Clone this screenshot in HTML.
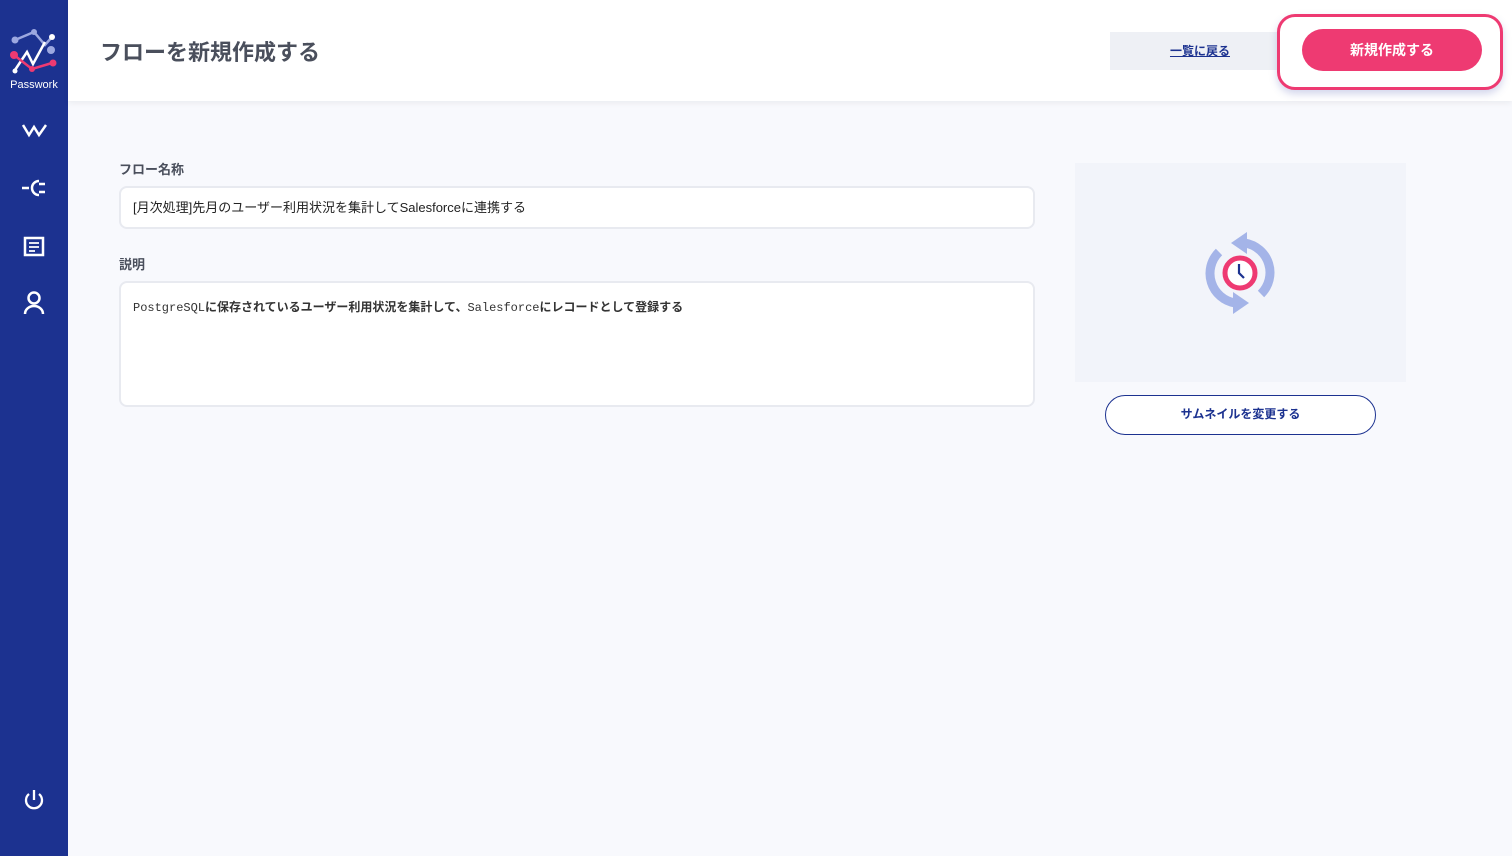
<!DOCTYPE html>
<html><head><meta charset="utf-8"><style>
*{box-sizing:border-box;margin:0;padding:0}
body{width:1512px;height:856px;background:#f8f9fd;font-family:"Liberation Sans","Noto Sans CJK JP",sans-serif;position:relative;overflow:hidden;color:#222}
.side{position:absolute;left:0;top:0;width:68px;height:856px;background:#1c3290}
.hdr{position:absolute;left:68px;top:0;right:0;height:101px;background:#fff;box-shadow:0 2px 6px rgba(0,0,0,.06)}
.title{position:absolute;left:100px;top:35px;font-size:22px;font-weight:bold;color:#4a4f5c}
.back{position:absolute;left:1110px;top:32px;width:180px;height:38px;background:#eef0f5;font-size:12px;font-weight:bold;color:#1c3290;text-decoration:underline;text-align:center;line-height:38px}
.outer{position:absolute;left:1277px;top:14px;width:226px;height:76px;border:3px solid #ee3a72;border-radius:18px;background:#fff;box-shadow:0 4px 8px rgba(80,90,180,.25)}
.new{position:absolute;left:1302px;top:29px;width:180px;height:42px;border-radius:21px;background:#ee3a72;color:#fff;font-size:14px;font-weight:bold;text-align:center;line-height:42px}
.lbl{position:absolute;left:119px;font-size:13px;font-weight:bold;color:#4a4f5c}
.in{position:absolute;left:119px;width:916px;background:#fff;border:2px solid #e8eaf0;border-radius:8px;font-size:13px;color:#222;padding-left:12px}
.thumb{position:absolute;left:1075px;top:163px;width:331px;height:219px;background:#f2f4fa}
.chg{position:absolute;left:1105px;top:395px;width:271px;height:40px;border:1.5px solid #1c3290;border-radius:20px;background:#fff;color:#1c3290;font-size:12px;font-weight:bold;text-align:center;line-height:37px}
</style></head><body>
<div class="side">
<svg width="68" height="80" style="position:absolute;left:0;top:22px">
<polyline points="15,18 34,10 45,23 52,15" stroke="#9ca8e0" stroke-width="2.5" fill="none"/>
<circle cx="15" cy="18" r="3.5" fill="#9ca8e0"/><circle cx="34" cy="10" r="3" fill="#9ca8e0"/><circle cx="52" cy="15" r="3" fill="#fff"/><circle cx="51" cy="28" r="4" fill="#9ca8e0"/>
<polyline points="15,48 27,30 33,42 45,20" stroke="#fff" stroke-width="2.5" fill="none"/>
<polyline points="14,33 32,47 52,41" stroke="#ee3a72" stroke-width="2.5" fill="none"/>
<circle cx="14" cy="33" r="4" fill="#ee3a72"/><circle cx="32" cy="47" r="3" fill="#ee3a72"/><circle cx="53" cy="41" r="3.5" fill="#ee3a72"/><circle cx="15" cy="49" r="2.5" fill="#fff"/>
</svg>
<div style="position:absolute;left:0;width:68px;top:79px;text-align:center;color:#fff;font-size:11px">Passwork</div>
<svg width="68" height="340" style="position:absolute;left:0;top:110px" stroke="#fff" fill="none" stroke-width="2.5">
<polyline points="23,15 29,25 34,17 39,25 46,15"/>
<path d="M22,78 h7 M39,71 a7,7 0 1 0 0,14 M39,74 h6 M39,82 h6"/>
<rect x="25" y="128" width="18" height="17"/><path d="M29,133h10M29,137h10M29,141h6" stroke-width="1.8"/>
<circle cx="34" cy="188" r="5.5"/><path d="M25,204 a9,8 0 0 1 18,0"/>
</svg>
<svg width="68" height="40" style="position:absolute;left:0;top:782px" stroke="#fff" fill="none" stroke-width="2.3"><path d="M29,12 a8,8 0 1 0 10,0"/><path d="M34,8 v10"/></svg>
</div>
<div class="hdr"></div>
<div class="title">フローを新規作成する</div>
<div class="back">一覧に戻る</div>
<div class="outer"></div>
<div class="new">新規作成する</div>
<div class="lbl" style="top:159px">フロー名称</div>
<div class="in" style="top:186px;height:43px;line-height:40px">[月次処理]先月のユーザー利用状況を集計してSalesforceに連携する</div>
<div class="lbl" style="top:254px">説明</div>
<div class="in" style="top:281px;height:126px;padding-top:15px;font-size:12px;font-weight:bold;color:#333"><span style="font-family:'Liberation Mono',monospace;font-weight:normal">PostgreSQL</span>に保存されているユーザー利用状況を集計して、<span style="font-family:'Liberation Mono',monospace;font-weight:normal">Salesforce</span>にレコードとして登録する</div>
<div class="thumb"></div>
<svg width="90" height="90" style="position:absolute;left:1195px;top:228px">
<path d="M24,24 A30,30 0 0 0 40,75" stroke="#a4b4e8" stroke-width="9" fill="none"/>
<path d="M38,64 L38,86 L54,75 Z" fill="#a4b4e8"/>
<path d="M66,66 A30,30 0 0 0 50,15" stroke="#a4b4e8" stroke-width="9" fill="none"/>
<path d="M52,4 L52,26 L36,15 Z" fill="#a4b4e8"/>
<circle cx="45" cy="45" r="15" fill="#fff" stroke="#ee3a72" stroke-width="5"/>
<path d="M44,36 v9 l5,5" stroke="#1c3290" stroke-width="2.2" fill="none"/>
</svg>
<div class="chg">サムネイルを変更する</div>
</body></html>
